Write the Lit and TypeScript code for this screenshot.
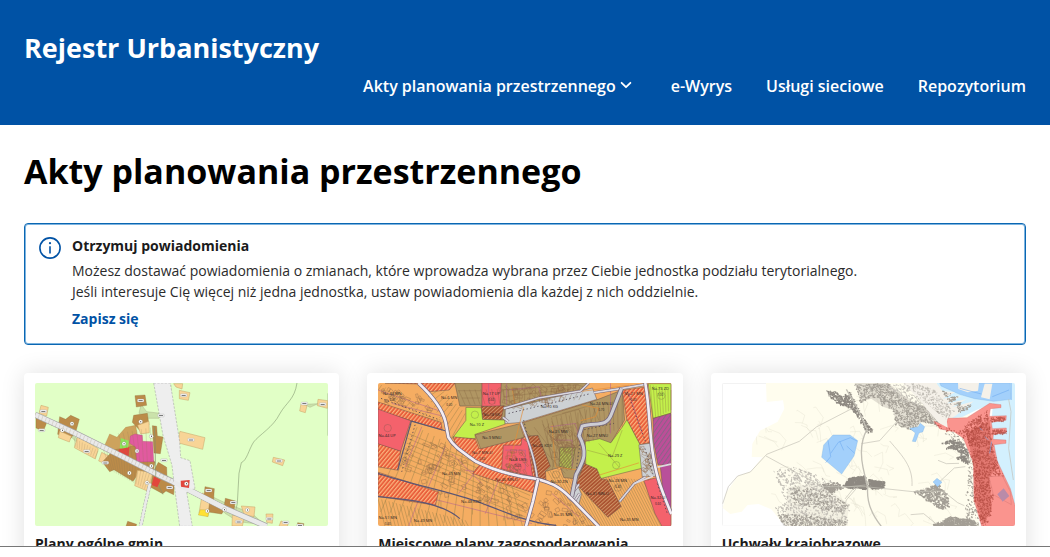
import { LitElement, html, svg, css } from "lit";
import { customElement } from "lit/decorators.js";

type Pt = [number, number];

const random = (seed: number) => () => {
  seed = (seed * 1664525 + 1013904223) % 4294967296;
  return seed / 4294967296;
};

const parse = (points: string): Pt[] =>
  points.split(" ").map((p) => p.split(",").map(Number) as Pt);

const inside = (x: number, y: number, poly: Pt[]) => {
  let hit = false;
  for (let i = 0, j = poly.length - 1; i < poly.length; j = i++) {
    const [xi, yi] = poly[i];
    const [xj, yj] = poly[j];
    if (yi > y !== yj > y && x < ((xj - xi) * (y - yi)) / (yj - yi) + xi) hit = !hit;
  }
  return hit;
};

/* Small rotated building footprints spread over a polygon. */
const buildings = (points: string, count: number, size: number, seed: number) => {
  const poly = parse(points);
  const xs = poly.map((p) => p[0]);
  const ys = poly.map((p) => p[1]);
  const x0 = Math.min(...xs), y0 = Math.min(...ys);
  const w = Math.max(...xs) - x0, h = Math.max(...ys) - y0;
  const rnd = random(seed);
  let d = "";
  for (let i = 0; i < count; i++) {
    const x = x0 + rnd() * w, y = y0 + rnd() * h;
    const s = size * (0.5 + rnd()), t = size * (0.3 + rnd() * 0.7), a = rnd() * 1.6;
    if (!inside(x, y, poly)) continue;
    const c = Math.cos(a), n = Math.sin(a);
    d += `M${x.toFixed(1)} ${y.toFixed(1)}l${(s * c).toFixed(1)} ${(s * n).toFixed(1)} ${(-t * n).toFixed(1)} ${(t * c).toFixed(1)} ${(-s * c).toFixed(1)} ${(-s * n).toFixed(1)}z`;
  }
  return d;
};

/* Parallel parcel borders between two edges. */
const parcels = (a: Pt, b: Pt, c: Pt, e: Pt, n: number) => {
  let d = "";
  for (let i = 0; i <= n; i++) {
    const t = i / n;
    d += `M${(a[0] + (b[0] - a[0]) * t).toFixed(1)} ${(a[1] + (b[1] - a[1]) * t).toFixed(1)}L${(c[0] + (e[0] - c[0]) * t).toFixed(1)} ${(c[1] + (e[1] - c[1]) * t).toFixed(1)}`;
  }
  return d;
};

const poly = (cls: string, points: string) => svg`<polygon class=${cls} points=${points}></polygon>`;
const line = (cls: string, d: string) => svg`<path class=${cls} d=${d}></path>`;

const mapStyles = css`
  :host { display: block; }
  svg { display: block; width: 100%; height: auto; border-radius: 2px; }
`;

@customElement("map-general")
export class MapGeneral extends LitElement {
  static styles = [mapStyles, css`
    path { fill: none; }
    .land { fill: #e1ffc6; }
    .brown { fill: #bb8b49; stroke: #8c6a37; stroke-width: 1; }
    .ochre { fill: #cda35d; stroke: #a98347; stroke-width: 1; }
    .sand { fill: #f8d496; stroke: #c5a468; stroke-width: 1.5; }
    .pink { fill: #e15a9f; stroke: #aa4d72; }
    .red { fill: #e2463c; }
    .green { fill: #8fe45a; }
    .yellow { fill: #ffe135; stroke: #b8a040; }
    .rail { fill: #eeeeee; stroke: #9c9c9c; stroke-width: 1.5; stroke-dasharray: 7 4; }
    .casing { stroke: #a6a6a6; stroke-width: 18; }
    .road { stroke: #eaeaea; stroke-width: 14; }
    .casing.lane { stroke-width: 11; stroke-dasharray: 7 3; }
    .road.lane { stroke-width: 8; }
    .mesh { stroke: #8b7751; stroke-width: 1; opacity: 0.6; }
    .stream { stroke: #82956f; stroke-width: 1.7; }
    .fan { stroke: #9a9a7a; stroke-width: 1; fill: #b6c89388; }
    .dot { fill: #fff; stroke: #887; stroke-width: 1; }
    .mark { fill: #444; }
    .tag { fill: #eee; stroke: #999; stroke-width: 0.7; }
  `];

  render() {
    const dots: Pt[] = [[141,161],[112,181],[347,155],[379,199],[297,221],[336,243],[379,288],[313,309],[366,338],[547,423],[598,419],[667,420],[484,341]];
    const tags: Pt[] = [[55,124],[50,181],[185,244],[241,279],[347,92],[408,137],[476,76],[498,210],[417,271],[434,353],[551,362],[625,398],[641,456],[733,447],[782,458],[825,467],[838,101],[762,273],[893,103]];
    return html`<svg viewBox="30 39 880 430" role="img" aria-label="Mapa planu ogólnego gminy">
      <rect class="land" x="30" y="39" width="880" height="430"></rect>
      ${line("stream", "M816 39C808 90 785 95 764 132C745 171 702 195 686 216C671 239 666 271 649 278L642 310L637 400L631 428")}
      ${line("stream", "M909 70V197")}
      ${line("fan", "M348 103L342 130 370 145 402 145 406 130 365 125z")}
      ${line("fan", "M839 103L879 101 855 112z")}
      ${line("fan", "M540 370L600 398 680 430 720 465 640 455 600 430z")}
      ${line("fan", "M118 180L210 242 160 222z")}
      ${poly("sand", "48,106 70,112 65,138 42,131")}
      ${poly("brown", "33,132 68,150 55,184 33,174")}
      ${poly("brown", "137,136 163,148 153,183 136,207 98,193 104,140 122,148")}
      ${poly("sand", "104,183 139,199 133,216 100,203")}
      ${poly("sand", "158,199 220,236 211,267 148,233")}
      ${poly("sand", "230,247 269,267 259,289 221,273")}
      ${poly("brown", "330,77 360,75 365,106 334,111")}
      ${poly("ochre", "254,192 276,202 302,172 332,166 345,245 289,260 236,233")}
      ${poly("brown", "326,136 367,130 372,165 344,181 322,157")}
      ${poly("sand", "338,166 372,154 373,188 347,192")}
      ${poly("brown", "382,167 395,169 397,198 414,201 406,251 387,249")}
      ${poly("brown", "266,240 331,227 390,276 384,307 337,316 324,334 267,299 254,305 232,276")}
      ${poly("green", "287,204 312,212 308,240 284,235")}
      ${poly("pink", "330,192 352,196 353,214 383,215 386,275 335,276 332,231 314,220 316,198")}
      ${poly("red", "284,237 313,232 311,258 274,251")}
      ${poly("sand", "337,301 387,309 367,363 329,347")}
      ${poly("brown", "400,277 425,292 426,330 448,340 446,374 423,363 413,371 376,351 385,305")}
      ${poly("red", "387,319 407,330 397,352 380,345")}
      ${poly("sand", "465,184 540,203 533,238 457,218")}
      ${poly("sand", "463,61 495,68 490,91 463,86")}
      ${poly("sand", "446,41 473,41 471,57 453,51")}
      ${poly("sand", "745,262 779,270 773,287 742,276")}
      ${poly("sand", "828,102 846,107 841,128 824,123")}
      ${poly("sand", "879,88 908,92 907,115 877,107")}
      ${poly("sand", "532,369 559,378 549,439 522,430")}
      ${poly("brown", "540,350 568,356 565,402 604,410 590,432 550,426 555,389 537,381")}
      ${poly("yellow", "526,419 552,420 549,440 520,435")}
      ${poly("brown", "601,385 631,393 627,419 598,407")}
      ${poly("sand", "649,408 690,411 687,440 657,434")}
      ${poly("sand", "622,436 659,440 652,468 621,468")}
      ${poly("sand", "723,432 744,432 742,460 725,457")}
      ${poly("brown", "308,454 335,463 333,469 303,469")}
      ${poly("brown", "818,458 837,461 835,469 817,469")}
      ${poly("sand", "768,453 790,460 787,469 762,469")}
      ${line("mesh", parcels([236, 240], [385, 305], [255, 300], [365, 360], 17))}
      ${line("mesh", parcels([280, 190], [390, 170], [300, 255], [390, 300], 8))}
      ${line("mesh", parcels([148, 205], [220, 242], [150, 230], [210, 264], 9))}
      ${line("casing", "M30 134L145 187 287 257 407 318 445 336 500 364 600 415 725 469")}
      ${line("road", "M30 134L145 187 287 257 407 318 445 336 500 364 600 415 725 469")}
      ${line("mesh", parcels([33, 128], [470, 337], [28, 143], [465, 349], 42))}
      ${line("casing lane", "M375 340L360 406 347 469")}
      ${line("road lane", "M375 340L360 406 347 469")}
      ${line("stream", "M388 170L391 235 392 320M400 345L414 373M457 218L438 100 437 45")}
      ${poly("rail", "386,39 436,39 464,215 467,263 495,272 510,355 485,366 502,469 464,469 448,346 441,286 414,196")}
      ${line("road", "M445 336L500 364 600 415")}
      ${poly("red", "467,332 494,330 492,354 468,350")}
      ${tags.map(([x, y]) => svg`<rect class="tag" x=${x - 10} y=${y - 5} width="20" height="9" rx="3"></rect><rect class="mark" x=${x - 6} y=${y - 1} width="12" height="2"></rect>`)}
      ${dots.map(([x, y]) => svg`<circle class="dot" cx=${x} cy=${y} r="6"></circle><rect class="mark" x=${x - 1} y=${y - 2} width="2.5" height="4"></rect>`)}
    </svg>`;
  }
}

@customElement("map-local")
export class MapLocal extends LitElement {
  static styles = [mapStyles, css`
    path { fill: none; }
    .land { fill: #f5ad62; }
    polygon { stroke: #66534a; stroke-width: 1.5; }
    .olive { fill: #b09663; }
    .lime { fill: #c3f04b; }
    .red { fill: #f4626c; }
    .gray { fill: #cdd1d4; }
    .plum { fill: #b9509a; }
    .hatch { fill: url(#hatch); }
    .rust { fill: url(#rust); }
    .violet { fill: url(#violet); }
    .grass { fill: url(#grass); }
    .net { stroke: #7d5f3e; stroke-width: 1.2; opacity: 0.7; }
    .plots { stroke: #7d7444; stroke-width: 1.3; opacity: 0.8; }
    .houses { stroke: #8f6a4a; stroke-width: 1.2; }
    .casing { stroke: #77687b; stroke-width: 12; }
    .road { stroke: #f3edf3; stroke-width: 8; }
    .casing.path { stroke-width: 8; }
    .road.path { stroke-width: 5; stroke: #dcd9df; }
    .casing.side { stroke-width: 14; }
    .road.side { stroke: #cdcdd4; stroke-width: 9; }
    .border { stroke: #5d5673; stroke-width: 3.5; }
    .dash { stroke: #49404f; stroke-width: 2.4; stroke-dasharray: 4 7; }
    .mauve { stroke: #b0608f; stroke-width: 1.6; }
    .gold { stroke: #e58e37; stroke-width: 2; }
    text { font: 12px "Open Sans", sans-serif; fill: #292424; text-anchor: middle; }
    .ratio { font-size: 9px; }
  `];

  render() {
    const labels: [number, number, string, string][] = [
      [82, 74, "Na.43 MN", "0.40"], [252, 88, "Na.6 MN", "0.40"], [378, 75, "Na.17 UP", "0.60"],
      [335, 169, "Na.10 Z", ""], [552, 113, "Na.10 KG", ""], [380, 206, "Na.9 MNU", ""],
      [66, 201, "Na.44 UP", ""], [579, 190, "Na.25 MW", ""], [351, 251, "Na.7 MN-U", "0.60"],
      [457, 272, "Na.8 UKS", "0.60"], [258, 313, "Na.45 MN", ""], [424, 333, "Na.46 MN-U", ""],
      [749, 262, "Na.29 Z", ""], [696, 200, "Na.27 MNU", ""], [707, 105, "Na.24 MN-U", "0.70"],
      [804, 74, "Na.21 MN", "0.40"], [884, 60, "Na.73 ZD", "1.00"], [592, 438, "Na.35 MN", ""],
      [791, 452, "Na.35 MN", ""], [174, 456, "Na.49 MN", ""], [68, 446, "Na.51 MN", "0.40"],
      [318, 397, "Na.48 KDD", ""], [581, 337, "Na.30 ZN", ""], [696, 373, "Na.31 MN-U", ""],
      [877, 385, "Na.32 U", "0.60"], [530, 231, "Na.26 KDX", ""], [757, 334, "Na.28 MN", "0.40"],
      [379, 137, "Na.18 KK", ""],
    ];
    const rings: Pt[] = [[752, 285], [887, 77], [329, 134], [68, 174], [757, 352], [380, 92], [457, 290], [572, 313]];
    const main = "M160 39C190 67 230 110 241 155L250 202C265 230 293 246 332 274C385 300 440 316 507 325C578 340 598 365 632 399L700 469";
    const lanes = "M413 142L430 155M415 115L520 84 645 63 670 39M467 157C488 211 510 266 516 329M641 342L610 382 626 395 642 370M840 320L805 341 762 394M685 68L770 55 840 43";
    const side = "M768 55L739 129C724 175 691 155 650 168L641 197C669 250 653 274 632 313L619 380";
    return html`<svg viewBox="39 39 878 429" role="img" aria-label="Mapa miejscowego planu zagospodarowania">
      <defs>
        <pattern id="hatch" width="9" height="9" patternUnits="userSpaceOnUse" patternTransform="rotate(40)"><rect width="9" height="9" fill="#e95f3c"></rect><rect width="3.5" height="9" fill="#fbb27c"></rect></pattern>
        <pattern id="rust" width="8" height="8" patternUnits="userSpaceOnUse" patternTransform="rotate(48)"><rect width="8" height="8" fill="#a9502f"></rect><rect width="3" height="8" fill="#cf9466"></rect></pattern>
        <pattern id="violet" width="11" height="11" patternUnits="userSpaceOnUse" patternTransform="rotate(35)"><rect width="11" height="11" fill="#bd4e98"></rect><rect width="3" height="11" fill="#8b6288"></rect></pattern>
        <pattern id="grass" width="7" height="7" patternUnits="userSpaceOnUse" patternTransform="rotate(40)"><rect width="7" height="7" fill="#97904a"></rect><rect width="2" height="7" fill="#b9cf55"></rect></pattern>
      </defs>
      <rect class="land" x="39" y="39" width="878" height="429"></rect>
      ${line("plots", parcels([139, 163], [430, 310], [20, 420], [480, 500], 17))}
      ${line("plots", parcels([50, 45], [220, 150], [40, 60], [200, 165], 14))}
      ${line("plots", parcels([220, 45], [300, 130], [180, 65], [258, 205], 9))}
      ${line("plots", parcels([545, 300], [840, 330], [640, 469], [910, 469], 34))}
      ${line("plots", parcels([39, 345], [510, 460], [39, 380], [510, 468], 5))}
      ${line("plots", parcels([39, 385], [300, 450], [60, 469], [310, 469], 24))}
      ${line("plots", parcels([130, 190], [110, 290], [500, 350], [480, 440], 7))}
      ${line("mauve", "M39 345L500 460M80 100L240 140M430 180L280 370M300 300L490 330M120 290L170 170M260 250L350 340M160 390L130 469M560 370L640 440M39 60L230 125M190 350L240 230M360 430L400 330")}
      ${line("houses", buildings("120,225 250,190 400,315 505,380 500,460 250,380 100,280", 150, 15, 9))}
      ${line("houses", buildings("39,45 165,70 230,140 39,90", 80, 12, 5))}
      ${line("houses", buildings("560,340 690,469 500,469 520,390", 65, 13, 31))}
      ${poly("hatch", "60,39 270,39 252,60 190,65 165,42")}
      ${poly("hatch", "39,96 228,157 231,180 39,122")}
      ${poly("hatch", "39,218 107,243 98,300 39,290")}
      ${poly("red", "39,117 137,152 107,243 39,221")}
      ${poly("hatch", "39,306 220,365 211,405 39,378")}
      ${poly("olive", "269,39 665,39 640,75 420,117 419,150 349,147 350,108 284,108")}
      ${poly("red", "350,39 408,39 405,110 350,109")}
      ${poly("rust", "348,109 417,107 407,150 352,148")}
      ${poly("lime", "302,112 348,113 352,148 419,150 420,162 329,193 331,205 262,204 302,151")}
      ${poly("hatch", "264,200 331,207 341,235 466,198 522,200 505,368 322,310 345,282 278,242")}
      ${poly("olive", "330,194 463,161 477,202 346,236")}
      ${poly("olive", "466,160 690,91 770,60 777,150 735,220 658,210 650,250 660,285 633,326 595,322 585,291 539,304 524,257")}
      ${poly("red", "414,225 467,225 470,203 488,218 502,319 409,296")}
      ${poly("rust", "487,198 518,196 555,288 540,303 542,330 510,325 495,248")}
      ${poly("gray", "420,117 681,54 694,88 467,157 419,161")}
      ${poly("hatch", "770,61 846,50 854,217 823,224 784,149")}
      ${poly("lime", "784,149 823,223 830,294 706,325 661,284 659,214 703,206 736,218 770,171")}
      ${poly("lime", "848,41 916,41 916,129 862,145")}
      ${poly("violet", "862,145 916,130 916,285 877,284 864,216")}
      ${poly("plum", "884,288 916,284 916,421 896,397")}
      ${poly("rust", "656,280 694,296 707,326 726,329 767,409 727,441 633,342")}
      ${poly("grass", "583,232 630,231 618,298 581,288")}
      ${poly("gray", "820,224 856,219 875,318 830,320")}
      ${poly("gray", "632,335 648,372 640,402 612,384")}
      ${poly("red", "835,331 877,322 916,432 916,468 889,468 868,430")}
      ${line("net", parcels([845, 42], [916, 60], [855, 150], [916, 120], 8))}
      ${line("net", parcels([280, 60], [660, 50], [300, 105], [640, 90], 23))}
      ${line("net", parcels([530, 150], [770, 85], [560, 270], [770, 170], 17))}
      ${line("net", parcels([480, 180], [690, 110], [600, 310], [650, 250], 8))}
      ${line("net", "M560 140L640 118 655 150 640 165 635 225 575 230 560 300M550 160L545 200 565 290M570 180L620 170 622 215 578 220zM590 130L680 105 700 150M280 62H345M290 84H345M410 60L640 44M415 80L600 60M820 234L866 270M825 255L870 290M828 280L872 305M830 300L850 320M700 220L760 290M665 240L740 260 770 180")}
      ${line("gold", "M440 50L448 100 500 92M600 70L680 60 790 46M645 152L690 140 700 115 650 105M560 165L570 290 640 300M700 315L820 278M475 112L415 350")}
      ${line("mauve", "M424 40V104M370 40V100M555 170L630 160 648 240M570 210H620V290M735 40V190M790 70L830 190M420 240H480V300M430 60L520 50 530 90")}
      ${line("houses", buildings("370,42 650,42 640,80 430,108", 55, 16, 43))}
      ${line("houses", buildings("540,165 640,150 650,240 570,280", 45, 22, 12))}
      ${line("houses", buildings("420,235 485,230 490,310 415,290", 24, 14, 17))}
      ${line("houses", buildings("820,228 850,222 872,315 834,316", 30, 12, 19))}
      ${line("border", "M139 153L240 182M139 153L98 300M39 310C150 345 265 367 345 397C430 430 500 460 572 465M39 379C140 388 230 398 284 445")}
      ${line("dash", "M150 164L110 305M430 130L670 72M475 150L517 325M620 380L650 180 745 160M838 235L864 318M48 85L225 150M785 65L840 215M875 340L905 430")}
      ${line("casing path", lanes)}${line("road path", lanes)}
      ${line("casing side", side)}${line("road side", side)}
      ${line("casing", main)}${line("road", main)}
      ${line("casing", "M518 327L503 393 482 468")}${line("road", "M518 327L503 393 482 468")}
      ${line("casing", "M839 39C852 112 850 166 860 240C870 311 880 340 917 431")}
      ${line("road", "M839 39C852 112 850 166 860 240C870 311 880 340 917 431")}
      ${line("road path", "M876 291L916 282M862 318L806 340")}
      ${rings.map(([x, y]) => svg`<circle cx=${x} cy=${y} r="11" fill="none" stroke="#554" stroke-width="0.8"></circle>`)}
      ${labels.map(([x, y, name, ratio]) => svg`<text x=${x} y=${y}>${name}</text><text class="ratio" x=${x} y=${y + 19}>${ratio}</text>`)}
    </svg>`;
  }
}

@customElement("map-landscape")
export class MapLandscape extends LitElement {
  static styles = [mapStyles, css`
    .paper { fill: #fff; stroke: #e5e5e5; stroke-width: 3; }
    .land { fill: #fffdee; }
    .sea { fill: #d3f0fe; }
    .zone { fill: #a3d0fb; stroke: #79afe0; }
    .port { fill: #f5f1e9; }
    .coast { fill: #fa948e; stroke: #c86e69; stroke-width: 1; }
    .mauve { fill: #b98ba9; }
    .town { fill: #a39e95; }
    .town.light { fill: #c3bfb7; }
    .town.dark { fill: #8e8982; }
    .town.red { fill: #b0483f; opacity: 0.8; }
    .shade { fill: #c7c2b8; opacity: 0.5; }
    .shade.dim { opacity: 0.2; }
    .blush { fill: #d2655c; opacity: 0.6; }
    .cell, .way, .vein { fill: none; }
    .cell { stroke: #e6e3d2; stroke-width: 1.3; }
    .way { stroke: #c2bfb5; stroke-width: 2; }
    .way.main { stroke-width: 4; }
    .vein { stroke: #6eaaf0; stroke-width: 1.7; }
  `];

  render() {
    const rnd = random(77);
    let cells = "";
    for (let i = 0; i < 95; i++) {
      const x = 90 + rnd() * 660, y = 50 + rnd() * 410;
      cells += `M${x} ${y}l${rnd() * 35} ${rnd() * 28 - 14} ${rnd() * 25} ${rnd() * 34} ${rnd() * 30 - 15} ${rnd() * 30}`;
    }
    return html`<svg viewBox="47 39 880 430" role="img" aria-label="Mapa uchwały krajobrazowej">
      <defs><clipPath id="county"><polygon points="179,39 750,39 812,180 800,280 820,469 244,469 225,455 195,418 157,402 124,405 106,425 72,432 49,414 59,369 94,318 134,304 168,262 136,261 138,221 161,182 214,155 234,116 230,91 181,96"></polygon></clipPath></defs>
      <rect class="paper" x="47" y="39" width="880" height="430"></rect>
      ${poly("land", "179,39 750,39 812,180 800,280 820,469 244,469 225,455 195,418 157,402 124,405 106,425 72,432 49,414 59,369 94,318 134,304 168,262 136,261 138,221 161,182 214,155 234,116 230,91 181,96")}
      <path class="cell" clip-path="url(#county)" d=${cells}></path>
      ${poly("sea", "690,39 927,39 927,410 912,365 870,280 850,225 860,100 810,120 770,140 735,145 722,120 700,65")}
      ${poly("zone", "700,39 912,39 913,88 862,94 805,86 760,73 704,48")}
      ${poly("port", "755,39 818,39 815,62 784,67 756,57")}
      ${poly("port", "835,41 858,41 850,88 824,82")}
      ${poly("port", "590,39 690,39 708,63 746,67 708,86 766,78 720,101 782,87 736,112 802,94 750,136 720,155 650,100")}
      ${poly("shade", "445,39 545,39 615,95 694,121 695,167 650,152 620,178 570,160 560,120 530,110 495,86 463,95")}
      ${poly("shade dim", "245,350 344,340 430,404 418,469 234,469")}
      <path class="town" d=${buildings("445,41 545,39 600,90 660,110 700,124 700,169 650,153 616,180 569,162 560,130 540,95 530,113 516,83 495,81 463,96", 2600, 4, 1)}></path>
      <path class="town light" d=${buildings("540,41 630,39 680,54 745,125 719,149 640,117 580,88", 900, 4, 16)}></path>
      <path class="town dark" d=${buildings("360,59 390,63 410,78 430,63 445,97 477,150 499,181 482,187 456,139 430,111 400,102 371,80", 1900, 5, 3)}></path>
      <path class="town" d=${buildings("700,58 738,71 719,83 758,75 727,100 785,92 740,111 799,100 764,128", 320, 5, 61)}></path>
      <path class="town light" d=${buildings("200,300 267,288 344,316 403,344 372,371 430,404 420,468 245,469 199,415 240,394 220,347", 1000, 5, 21)}></path>
      <path class="town" d=${buildings("249,350 350,356 430,404 407,429 320,413 252,393", 600, 4, 27)}></path>
      <path class="town" d=${buildings("210,430 290,431 418,450 418,469 234,469", 480, 4, 24)}></path>
      <path class="town dark" d=${buildings("410,347 431,321 477,315 479,354 434,351", 620, 6, 24)}></path>
      <path class="town dark" d=${buildings("488,326 533,333 529,352 488,350", 330, 6, 8)}></path>
      <path class="town" d=${buildings("338,341 392,335 408,352 373,366", 260, 5, 11)}></path>
      <path class="town" d=${buildings("613,365 660,353 696,337 722,374 732,404 707,417 677,399 645,375", 900, 5, 44)}></path>
      <path class="town dark" d=${buildings("703,218 736,207 765,214 784,243 787,282 748,262 766,250 751,236 716,233 742,220", 800, 5, 73)}></path>
      <path class="town" d=${buildings("685,160 725,180 764,195 798,270 802,380 820,468 780,468 777,390 785,310 775,240", 1100, 4, 46)}></path>
      <path class="town" d=${buildings("680,462 711,450 731,437 805,450 810,468 685,468", 800, 5, 32)}></path>
      ${line("way main", "M420 58L452 112 482 178C461 216 463 258 470 292L484 354C481 391 495 432 525 469")}
      ${line("way", "M49 401L66 350 94 318 132 306 181 253 279 214 330 171 442 113M465 221L520 212 572 154M550 213C590 260 620 290 617 348M179 258L278 312 350 350 478 350 620 365 710 363 754 398 774 407M410 352L478 345M455 350L420 390 400 469M613 434L652 431 690 462M695 271L720 281 758 280M700 335L744 294 777 290M445 351L416 387")}
      ${poly("zone", "380,195 431,195 454,212 443,258 406,312 346,262 352,225")}
      ${line("vein", "M365 211L373 260 358 278M373 250L396 217 432 203 452 213M421 228L445 250M400 214L412 241")}
      ${poly("zone", "610,175 635,171 642,160 655,170 649,186 638,188 628,215 618,214 627,189")}
      ${poly("zone", "680,336 692,325 707,337 694,350")}
      ${poly("coast", "682,153 718,167 725,145 782,143 850,100 884,104 884,113 852,116 849,139 900,137 899,151 855,157 858,176 900,174 900,187 861,194 860,208 899,210 899,220 863,224 873,274 912,356 927,410 927,469 826,469 803,391 801,278 771,205 743,185 701,177")}
      ${poly("blush", "780,190 850,150 857,230 874,290 850,320 856,420 830,466 806,390 803,285")}
      <path class="town red" d=${buildings("771,164 842,120 855,213 874,278 895,320 850,320 862,380 846,458 828,466 804,390 802,285 784,213", 2400, 4, 67)}></path>
      <path class="town red" d=${buildings("684,153 750,182 830,166 807,222 782,217 751,188 696,176", 260, 4, 7)}></path>
      <path class="town red" d=${buildings("852,140 896,138 896,151 855,155", 90, 4, 71)}></path>
      <path class="town red" d=${buildings("858,178 900,176 899,190 858,192", 90, 4, 2)}></path>
      ${poly("coast", "848,320 888,318 912,365 915,404 861,374")}
      ${poly("mauve", "873,373 892,355 909,378 889,395")}
      ${line("vein", "M915 39V90M760 55L825 72M858 80L908 60M820 174L828 181M836 200L846 210M856 215L850 250")}
      ${line("way", "M907 88L914 125 907 235 921 330")}
      ${poly("port", "633,78 721,151 724,173 697,158 660,116")}
    </svg>`;
  }
}

@customElement("app-root")
export class AppRoot extends LitElement {
  static styles = css`
    :host {
      display: flex;
      flex-direction: column;
      height: 100vh;
      background: #fff;
      color: #1b1b1b;
      font-family: "Open Sans", "Noto Sans", sans-serif;
      font-size: 14px;
      line-height: 21px;
    }
    * { box-sizing: border-box; }
    a { color: inherit; text-decoration: none; }
    h1, h2, h3, p, ul { margin: 0; padding: 0; }
    .viewport { flex: 1; min-height: 0; overflow: hidden; }
    .header {
      background: #0052a5;
      color: #fff;
      padding: 28px 24px 27px;
    }
    .brand { display: block; font-size: 27px; line-height: 40px; font-weight: 700; }
    .nav {
      display: flex;
      flex-wrap: wrap;
      justify-content: flex-end;
      gap: 0 34px;
      padding-top: 6px;
      font-size: 16px;
      line-height: 24px;
      font-weight: 600;
      list-style: none;
    }
    .toggle {
      display: flex;
      align-items: center;
      gap: 4px;
      padding: 0 5px 0 0;
      border: 0;
      background: none;
      color: inherit;
      font: inherit;
      cursor: pointer;
    }
    .chevron { display: block; width: 12px; height: 12px; }
    .main { padding: 22px 24px; }
    .heading { color: #000; font-size: 34px; line-height: 48px; font-weight: 700; }
    .notice {
      display: flex;
      gap: 11px;
      margin: 28px 0;
      padding: 11px 14px 15px;
      border: 1px solid #0b67b2;
      border-radius: 4px;
      box-shadow: inset 0 0 0 1px #7db4e0;
    }
    .info { flex: none; width: 22px; height: 22px; margin-top: 2px; }
    .notice-title { font-size: 14px; line-height: 21px; font-weight: 700; }
    .notice-text { padding: 4px 0 6px; color: #2b2b2b; }
    .signup { color: #0052a5; font-weight: 700; }
    .cards { display: grid; grid-template-columns: repeat(3, 1fr); gap: 28px; list-style: none; }
    .card {
      padding: 10px 11px 24px;
      border-radius: 4px;
      background: #fff;
      box-shadow: 0 0 24px rgba(0, 0, 0, 0.12);
    }
    .card-title { padding-top: 8px; font-size: 14px; line-height: 20px; font-weight: 700; }
    .bar { flex: none; height: 11px; border-top: 1px solid #777; background: #fff; }
  `;

  render() {
    return html`
      <div class="viewport">
        <header class="header">
          <a class="brand" href="#">Rejestr Urbanistyczny</a>
          <nav>
            <ul class="nav">
              <li>
                <button class="toggle" type="button" aria-haspopup="true">
                  Akty planowania przestrzennego
                  <svg class="chevron" viewBox="0 0 12 12" fill="none" stroke="#fff" stroke-width="1.8" stroke-linecap="round" stroke-linejoin="round" aria-hidden="true"><path d="M1.6 2.8 6 7.2l4.4-4.4"></path></svg>
                </button>
              </li>
              <li><a href="#">e-Wyrys</a></li>
              <li><a href="#">Usługi sieciowe</a></li>
              <li><a href="#">Repozytorium</a></li>
            </ul>
          </nav>
        </header>
        <main class="main">
          <h1 class="heading">Akty planowania przestrzennego</h1>
          <section class="notice">
            <svg class="info" viewBox="0 0 22 22" fill="none" stroke="#0052a5" stroke-width="1.6" aria-hidden="true">
              <circle cx="11" cy="11" r="10.1"></circle>
              <path d="M11 9.2v7.2"></path>
              <circle cx="11" cy="6.2" r="1.1" fill="#0052a5" stroke="none"></circle>
            </svg>
            <div>
              <h2 class="notice-title">Otrzymuj powiadomienia</h2>
              <p class="notice-text">
                Możesz dostawać powiadomienia o zmianach, które wprowadza wybrana przez Ciebie jednostka podziału terytorialnego.<br />
                Jeśli interesuje Cię więcej niż jedna jednostka, ustaw powiadomienia dla każdej z nich oddzielnie.
              </p>
              <a class="signup" href="#">Zapisz się</a>
            </div>
          </section>
          <ul class="cards">
            <li class="card"><map-general></map-general><h3 class="card-title"><a href="#">Plany ogólne gmin</a></h3></li>
            <li class="card"><map-local></map-local><h3 class="card-title"><a href="#">Miejscowe plany zagospodarowania</a></h3></li>
            <li class="card"><map-landscape></map-landscape><h3 class="card-title"><a href="#">Uchwały krajobrazowe</a></h3></li>
          </ul>
        </main>
      </div>
      <div class="bar"></div>
    `;
  }
}
